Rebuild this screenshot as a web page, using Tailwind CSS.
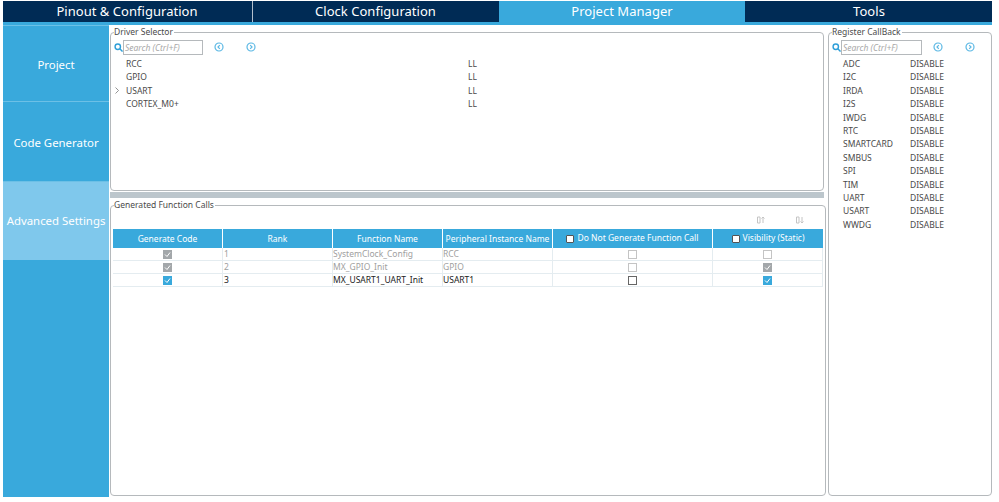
<!DOCTYPE html>
<html lang="en">

<head>
    <meta charset="UTF-8">
    <script src="https://cdn.jsdelivr.net/npm/@tailwindcss/browser@4"></script>
    <title>Project Manager</title>
</head>

<body class="bg-white font-['Noto_Sans',sans-serif] text-[8.5px] text-[#4a4a4a]">
    <div class="w-[999px] h-[502px] overflow-hidden pl-[3px] pt-px flex flex-col">
        <!-- top tabs -->
        <div class="w-[989px] h-[21px] shrink-0 bg-[#002b55] flex gap-px text-white text-[13px] tracking-[0.03px] leading-[21px] text-center">
            <div class="w-[248px]">Pinout &amp; Configuration</div>
            <div class="w-[246px] border-l border-white/70">Clock Configuration</div>
            <div class="w-[246px] bg-[#39a9dc]">Project Manager</div>
            <div class="flex-1">Tools</div>
        </div>
        <div class="w-[989px] h-[3px] shrink-0 bg-[#39a9dc]"></div>

        <div class="flex w-[989px] h-[472px]">
            <!-- side menu -->
            <div class="w-[106px] shrink-0 bg-[#39a9dc] text-white text-[11.4px] text-center">
                <div class="h-[77px] leading-[77px] border-t border-b border-[#6cc0e6]">Project</div>
                <div class="h-[80px] leading-[82px] border-b border-[#6cc0e6]">Code Generator</div>
                <div class="h-[78px] leading-[78px] bg-[#7fc8ec]">Advanced Settings</div>
            </div>

            <div class="flex-1 flex pl-px pt-[2px] gap-[3px]">
                <div class="w-[715px] flex flex-col">
                    <!-- driver selector -->
                    <fieldset class="h-[164px] w-[714px] shrink-0 border border-[#b5b9bc] rounded-[4px] pl-[3px] pt-[2px]">
                        <legend class="pr-px leading-[10px]">Driver Selector</legend>
                        <div class="flex items-center h-[16px]">
                            <svg class="w-[9px] h-[9px] text-[#2f9fd8]" viewBox="0 0 10 10" fill="none" stroke="currentColor" stroke-width="1.6"><circle cx="4.2" cy="4.2" r="3"/><path d="M6.500 6.500 9.500 9.500"/></svg>
                            <div class="w-[80px] h-[15px] border border-[#b5b9bc] pl-px italic text-[#a8a8a8] leading-[13px]">Search (Ctrl+F)</div>
                            <svg class="w-[10px] h-[10px] ml-[11px] text-[#5cb8e4]" viewBox="0 0 10 10" fill="none" stroke="currentColor" stroke-width="1.2"><circle cx="5" cy="5" r="4"/><path d="M5.800 3.200 4 5l1.800 1.800"/></svg>
                            <svg class="w-[10px] h-[10px] ml-[22px] text-[#5cb8e4]" viewBox="0 0 10 10" fill="none" stroke="currentColor" stroke-width="1.2"><circle cx="5" cy="5" r="4"/><path d="M4.200 3.200 6 5 4.200 6.800"/></svg>
                        </div>
                        <div class="mt-[2px] leading-[13.4px]">
                            <div class="flex"><span class="w-[12px]"></span><span class="w-[342px]">RCC</span><span>LL</span></div>
                            <div class="flex"><span class="w-[12px]"></span><span class="w-[342px]">GPIO</span><span>LL</span></div>
                            <div class="flex items-center">
                                <svg class="w-[12px] h-[7px] pr-[6px]" viewBox="0 0 6 7" fill="none" stroke="#777" stroke-width="0.8"><path d="M1.500 .5 4.500 3.500 1.500 6.500"/></svg>
                                <span class="w-[342px]">USART</span><span>LL</span>
                            </div>
                            <div class="flex"><span class="w-[12px]"></span><span class="w-[342px]">CORTEX_M0+</span><span>LL</span></div>
                        </div>
                    </fieldset>

                    <div class="h-[6px] w-[714px] shrink-0 mt-px bg-[#bcc6cc]"></div>

                    <!-- generated function calls -->
                    <fieldset class="mt-[2px] h-[296px] border border-[#b5b9bc] rounded-[4px] pl-[2px] pr-[2px]">
                        <legend class="ml-px pr-px leading-[10px]">Generated Function Calls</legend>
                        <div class="h-[19px] flex justify-end items-center gap-[31px] pr-[19px] text-[#c4c4c4]">
                            <svg class="w-[8px] h-[8px]" viewBox="0 0 8 8" fill="none" stroke="currentColor"><path d="M.5 1v6h2.500V1zM6 7V1M4.500 2.500 6 1l1.500 1.500"/></svg>
                            <svg class="w-[8px] h-[8px]" viewBox="0 0 8 8" fill="none" stroke="currentColor"><path d="M.5 1v6h2.500V1zM6 1v6M4.500 5.500 6 7l1.500-1.500"/></svg>
                        </div>
                        <div class="grid grid-cols-[110px_110px_110px_110px_160px_110px] w-[710px]">
                            <!-- header -->
                            <div class="h-[19px] mr-px bg-[#39a9dc] text-white text-center leading-[19px]">Generate Code</div>
                            <div class="h-[19px] mr-px bg-[#39a9dc] text-white text-center leading-[19px]">Rank</div>
                            <div class="h-[19px] mr-px bg-[#39a9dc] text-white text-center leading-[19px]">Function Name</div>
                            <div class="h-[19px] mr-px bg-[#39a9dc] text-white text-center leading-[19px] whitespace-nowrap">Peripheral Instance Name</div>
                            <div class="h-[19px] mr-px bg-[#39a9dc] text-white flex items-center justify-center gap-[3px]"><span class="w-[8px] h-[8px] bg-white border border-[#555] rounded-[1px]"></span>Do Not Generate Function Call</div>
                            <div class="h-[19px] bg-[#39a9dc] text-white flex items-center justify-center gap-[3px]"><span class="w-[8px] h-[8px] bg-white border border-[#555] rounded-[1px]"></span>Visibility (Static)</div>

                            <!-- row 1 -->
                            <div class="h-[13px] border-b border-r border-[#e4ecf0] flex items-center justify-center"><svg class="w-[9px] h-[9px]" viewBox="0 0 9 9"><rect width="9" height="9" fill="#a3a7aa"/><path d="M2 4.500 4 6.500 7 2.500" fill="none" stroke="#fff"/></svg></div>
                            <div class="h-[13px] border-b border-r border-[#e4ecf0] pl-px leading-[12px] text-[#a0a0a0]">1</div>
                            <div class="h-[13px] border-b border-r border-[#e4ecf0] leading-[12px] text-[#a0a0a0]">SystemClock_Config</div>
                            <div class="h-[13px] border-b border-r border-[#e4ecf0] leading-[12px] text-[#a0a0a0]">RCC</div>
                            <div class="h-[13px] border-b border-r border-[#e4ecf0] flex items-center justify-center"><span class="w-[9px] h-[9px] border border-[#c4c4c4]"></span></div>
                            <div class="h-[13px] border-b border-r border-[#e4ecf0] flex items-center justify-center"><span class="w-[9px] h-[9px] border border-[#c4c4c4]"></span></div>

                            <!-- row 2 -->
                            <div class="h-[13px] border-b border-r border-[#e4ecf0] flex items-center justify-center"><svg class="w-[9px] h-[9px]" viewBox="0 0 9 9"><rect width="9" height="9" fill="#a3a7aa"/><path d="M2 4.500 4 6.500 7 2.500" fill="none" stroke="#fff"/></svg></div>
                            <div class="h-[13px] border-b border-r border-[#e4ecf0] pl-px leading-[12px] text-[#a0a0a0]">2</div>
                            <div class="h-[13px] border-b border-r border-[#e4ecf0] leading-[12px] text-[#a0a0a0]">MX_GPIO_Init</div>
                            <div class="h-[13px] border-b border-r border-[#e4ecf0] leading-[12px] text-[#a0a0a0]">GPIO</div>
                            <div class="h-[13px] border-b border-r border-[#e4ecf0] flex items-center justify-center"><span class="w-[9px] h-[9px] border border-[#c4c4c4]"></span></div>
                            <div class="h-[13px] border-b border-r border-[#e4ecf0] flex items-center justify-center"><svg class="w-[9px] h-[9px]" viewBox="0 0 9 9"><rect width="9" height="9" fill="#a3a7aa"/><path d="M2 4.500 4 6.500 7 2.500" fill="none" stroke="#fff"/></svg></div>

                            <!-- row 3 -->
                            <div class="h-[13px] border-b border-r border-[#e4ecf0] flex items-center justify-center"><svg class="w-[9px] h-[9px]" viewBox="0 0 9 9"><rect width="9" height="9" fill="#39a9dc"/><path d="M2 4.500 4 6.500 7 2.500" fill="none" stroke="#fff"/></svg></div>
                            <div class="h-[13px] border-b border-r border-[#e4ecf0] pl-px leading-[12px] text-[#222]">3</div>
                            <div class="h-[13px] border-b border-r border-[#e4ecf0] leading-[12px] text-[#222]">MX_USART1_UART_Init</div>
                            <div class="h-[13px] border-b border-r border-[#e4ecf0] leading-[12px] text-[#222]">USART1</div>
                            <div class="h-[13px] border-b border-r border-[#e4ecf0] flex items-center justify-center"><span class="w-[9px] h-[9px] border border-[#666]"></span></div>
                            <div class="h-[13px] border-b border-r border-[#e4ecf0] flex items-center justify-center"><svg class="w-[9px] h-[9px]" viewBox="0 0 9 9"><rect width="9" height="9" fill="#39a9dc"/><path d="M2 4.500 4 6.500 7 2.500" fill="none" stroke="#fff"/></svg></div>
                        </div>
                    </fieldset>
                </div>

                <!-- register callback -->
                <fieldset class="w-[164px] h-[469px] border border-[#b5b9bc] rounded-[4px] pl-[3px] pt-[2px]">
                    <legend class="pr-px leading-[10px]">Register CallBack</legend>
                    <div class="flex items-center h-[16px]">
                        <svg class="w-[9px] h-[9px] text-[#2f9fd8]" viewBox="0 0 10 10" fill="none" stroke="currentColor" stroke-width="1.6"><circle cx="4.2" cy="4.2" r="3"/><path d="M6.500 6.500 9.500 9.500"/></svg>
                        <div class="w-[81px] h-[15px] border border-[#b5b9bc] pl-px italic text-[#a8a8a8] leading-[13px]">Search (Ctrl+F)</div>
                        <svg class="w-[10px] h-[10px] ml-[11px] text-[#5cb8e4]" viewBox="0 0 10 10" fill="none" stroke="currentColor" stroke-width="1.2"><circle cx="5" cy="5" r="4"/><path d="M5.800 3.200 4 5l1.800 1.800"/></svg>
                        <svg class="w-[10px] h-[10px] ml-[22px] text-[#5cb8e4]" viewBox="0 0 10 10" fill="none" stroke="currentColor" stroke-width="1.2"><circle cx="5" cy="5" r="4"/><path d="M4.200 3.200 6 5 4.200 6.800"/></svg>
                    </div>
                    <div class="mt-[2px] ml-[11px] leading-[13.4px] grid grid-cols-[67px_1fr]">
                        <span>ADC</span><span>DISABLE</span>
                        <span>I2C</span><span>DISABLE</span>
                        <span>IRDA</span><span>DISABLE</span>
                        <span>I2S</span><span>DISABLE</span>
                        <span>IWDG</span><span>DISABLE</span>
                        <span>RTC</span><span>DISABLE</span>
                        <span>SMARTCARD</span><span>DISABLE</span>
                        <span>SMBUS</span><span>DISABLE</span>
                        <span>SPI</span><span>DISABLE</span>
                        <span>TIM</span><span>DISABLE</span>
                        <span>UART</span><span>DISABLE</span>
                        <span>USART</span><span>DISABLE</span>
                        <span>WWDG</span><span>DISABLE</span>
                    </div>
                </fieldset>
            </div>
        </div>
    </div>
</body>

</html>
